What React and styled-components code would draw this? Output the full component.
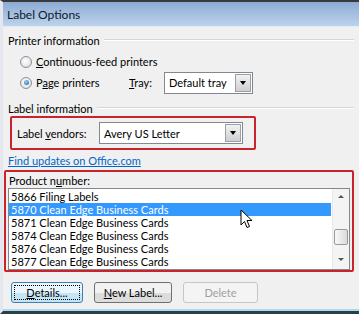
import React from "react";
import styled, { createGlobalStyle } from "styled-components";

const GlobalStyle = createGlobalStyle`
  html, body {
    margin: 0;
    padding: 0;
    background: #f0f0f0;
  }
  * {
    box-sizing: border-box;
  }
`;

const Window = styled.div`
  width: 359px;
  height: 314px;
  background: #f0f0f0;
  border-top: 2px solid #3a3a3a;
  border-bottom: 3px solid #2c3e48;
  border-left: 3px solid #e4e8ee;
  display: flex;
  flex-direction: column;
  font-family: Lato, "Liberation Sans", sans-serif;
  font-size: 11px;
  color: #000;
  white-space: nowrap;
  overflow: hidden;
`;

const TitleBar = styled.div`
  height: 25px;
  flex: none;
  background: linear-gradient(#8eabd4, #bcd3ec);
  border-bottom: 1px solid #e2ecf7;
  padding-left: 4px;
  display: flex;
  align-items: center;
  font-size: 12px;
  color: #0d1a2b;
`;

const Body = styled.div`
  flex: 1;
  padding: 4px 5px 0 5px;
  display: flex;
  flex-direction: column;
  border-bottom: 2px solid #a9dbee;
  & > * {
    flex: none;
  }
`;

const GroupHeader = styled.div`
  display: flex;
  align-items: center;
  gap: 4px;
  height: ${(p) => p.$h || 18}px;
  margin-top: ${(p) => p.$top || 0}px;
  &::after {
    content: "";
    flex: 1;
    border-top: 1px solid #d5d5d5;
    border-bottom: 1px solid #fff;
  }
`;

const RadioRow = styled.div`
  display: flex;
  align-items: center;
  height: 21px;
  padding-left: 12px;
  margin-top: ${(p) => p.$top || 0}px;
`;

const Radio = styled.span`
  width: 12px;
  height: 12px;
  flex: none;
  border-radius: 50%;
  border: 1px solid #8a8f96;
  background: radial-gradient(circle at 45% 40%, #ffffff, #d4d7dc);
  display: inline-flex;
  align-items: center;
  justify-content: center;
  margin-right: 4px;
  &::after {
    content: "";
    width: 5px;
    height: 5px;
    border-radius: 50%;
    background: ${(p) => (p.$checked ? "radial-gradient(circle at 40% 35%, #9fd0f5, #1b5e9c)" : "transparent")};
  }
`;

const Label = styled.span`
  display: inline-block;
  width: ${(p) => (p.$w ? `${p.$w}px` : "auto")};
  flex: none;
`;

const U = styled.span`
  text-decoration: underline;
`;

const Select = styled.div`
  width: ${(p) => p.$w}px;
  height: 22px;
  flex: none;
  border: 1px solid #828790;
  background: #fff;
  display: flex;
  align-items: center;
  padding-left: 4px;
`;

const SelectText = styled.span`
  flex: 1;
`;

const DropButton = styled.span`
  width: 16px;
  height: 18px;
  margin-right: 1px;
  border: 1px solid #9aa0a8;
  background: linear-gradient(#f2f2f2, #cfcfcf);
  display: flex;
  align-items: center;
  justify-content: center;
  &::after {
    content: "";
    border-left: 3px solid transparent;
    border-right: 3px solid transparent;
    border-top: 4px solid #000;
  }
`;

const Highlight = styled.div`
  border: 2px solid #c9242b;
  border-radius: 2px;
`;

const VendorBox = styled(Highlight)`
  width: 246px;
  height: 34px;
  margin-left: 2px;
  display: flex;
  align-items: center;
  padding-left: 5px;
`;

const Link = styled.a`
  color: #0066cc;
  text-decoration: underline;
  margin-top: 2px;
  height: 16px;
  display: flex;
  align-items: center;
`;

const ProductBox = styled(Highlight)`
  margin: 2px 0 0 -4px;
  height: 102px;
  padding: 1px 2px 0 2px;
  display: flex;
  flex-direction: column;
`;

const ProductLabel = styled.div`
  height: 15px;
  line-height: 15px;
  padding-left: 1px;
`;

const ListBox = styled.div`
  height: 82px;
  border: 1px solid #828790;
  background: #fff;
  display: flex;
  position: relative;
`;

const Items = styled.div`
  flex: 1;
  padding: 1px 1px 0 0;
`;

const Item = styled.div`
  height: 13px;
  line-height: 13px;
  padding-left: 2px;
  background: ${(p) => (p.$sel ? "#3399ff" : "transparent")};
  color: ${(p) => (p.$sel ? "#fff" : "#000")};
`;

const ScrollBar = styled.div`
  width: 17px;
  background: #f4f4f4;
  border-left: 1px solid #e8e8e8;
  display: flex;
  flex-direction: column;
  align-items: center;
  justify-content: space-between;
  padding: 6px 0 8px;
  position: relative;
`;

const Arrow = styled.span`
  border-left: 3px solid transparent;
  border-right: 3px solid transparent;
  ${(p) => (p.$up ? "border-bottom: 3px solid #555;" : "border-top: 3px solid #555;")}
`;

const Thumb = styled.span`
  position: absolute;
  left: 1px;
  top: 40px;
  width: 14px;
  height: 16px;
  border: 1px solid #9a9a9a;
  border-radius: 2px;
  background: linear-gradient(90deg, #f8f8f8, #dadada);
`;

const Cursor = styled.svg`
  position: absolute;
  left: 231px;
  top: 20px;
`;

const ButtonRow = styled.div`
  display: flex;
  gap: 11px;
  margin-top: 10px;
  padding-left: 3px;
`;

const Button = styled.div`
  width: ${(p) => p.$w}px;
  height: 21px;
  border: 1px solid ${(p) => (p.$focus ? "#3c7fb1" : p.$disabled ? "#c6c6c6" : "#707070")};
  border-radius: 3px;
  background: ${(p) =>
    p.$disabled
      ? "#f4f4f4"
      : p.$focus
      ? "linear-gradient(#eaf6fd 50%, #c4e5f6 50%)"
      : "linear-gradient(#f2f2f2 50%, #dcdcdc 50%)"};
  color: ${(p) => (p.$disabled ? "#a0a0a0" : "#000")};
  display: flex;
  align-items: center;
  justify-content: center;
  position: relative;
  ${(p) =>
    p.$focus &&
    `&::before {
      content: "";
      position: absolute;
      inset: 2px;
      border: 1px dotted #000;
    }`}
`;

const products = [
  "5866 Filing Labels",
  "5870 Clean Edge Business Cards",
  "5871 Clean Edge Business Cards",
  "5874 Clean Edge Business Cards",
  "5876 Clean Edge Business Cards",
  "5877 Clean Edge Business Cards",
];

export default function App() {
  return (
    <>
      <GlobalStyle />
      <Window>
        <TitleBar>Label Options</TitleBar>
        <Body>
          <GroupHeader>Printer information</GroupHeader>
          <RadioRow $top={2}>
            <Radio />
            <Label>
              <U>C</U>ontinuous-feed printers
            </Label>
          </RadioRow>
          <RadioRow>
            <Radio $checked />
            <Label $w={93}>
              P<U>a</U>ge printers
            </Label>
            <Label $w={35}>
              <U>T</U>ray:
            </Label>
            <Select $w={89}>
              <SelectText>Default tray</SelectText>
              <DropButton />
            </Select>
          </RadioRow>
          <GroupHeader $h={16} $top={7}>
            Label information
          </GroupHeader>
          <VendorBox>
            <Label $w={82}>
              Label <U>v</U>endors:
            </Label>
            <Select $w={144}>
              <SelectText>Avery US Letter</SelectText>
              <DropButton />
            </Select>
          </VendorBox>
          <Link>Find updates on Office.com</Link>
          <ProductBox>
            <ProductLabel>
              Product n<U>u</U>mber:
            </ProductLabel>
            <ListBox>
              <Items>
                {products.map((p, i) => (
                  <Item key={p} $sel={i === 1}>
                    {p}
                  </Item>
                ))}
              </Items>
              <ScrollBar>
                <Arrow $up />
                <Thumb />
                <Arrow />
              </ScrollBar>
              <Cursor width="14" height="21" viewBox="0 0 14 21">
                <path
                  d="M1 1 L1 16 L4.5 12.5 L7 18.5 L9.5 17.5 L7 11.5 L12 11.5 Z"
                  fill="#fff"
                  stroke="#000"
                  strokeWidth="1"
                  strokeLinejoin="round"
                />
              </Cursor>
            </ListBox>
          </ProductBox>
          <ButtonRow>
            <Button $w={72} $focus>
              <span>
                <U>D</U>etails...
              </span>
            </Button>
            <Button $w={78}>
              <span>
                <U>N</U>ew Label...
              </span>
            </Button>
            <Button $w={75} $disabled>
              Delete
            </Button>
          </ButtonRow>
        </Body>
      </Window>
    </>
  );
}
